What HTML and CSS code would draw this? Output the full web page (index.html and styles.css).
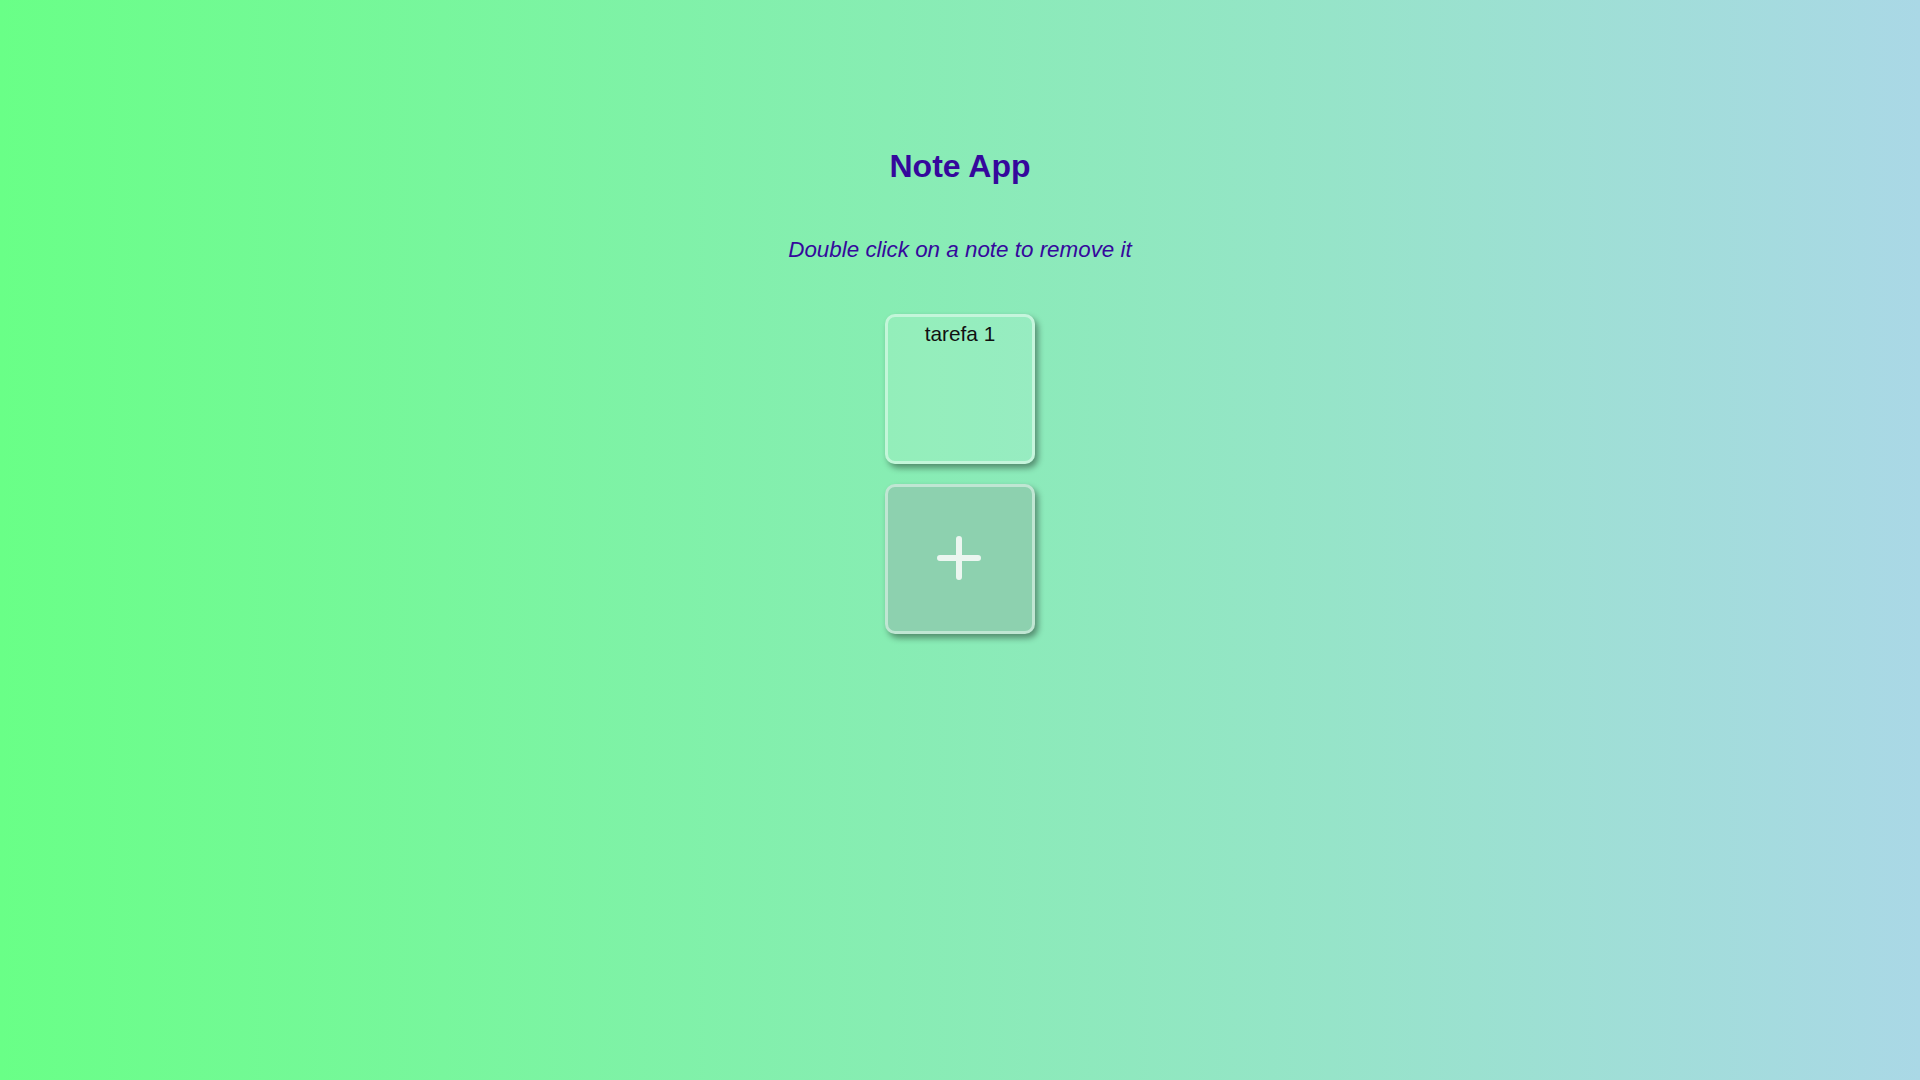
FILE: index.html
```html
<!DOCTYPE html>
<html lang="en">
<head>
<meta charset="UTF-8">
<title>Note App</title>
<link rel="stylesheet" href="styles.css">
</head>
<body>
<main class="app">
  <h1 class="title">Note App</h1>
  <p class="subtitle">Double click on a note to remove it</p>
  <div class="notes">
    <div class="note">tarefa 1</div>
    <button class="add-btn" type="button" aria-label="Add note">
      <svg width="44" height="44" viewBox="0 0 44 44"><path d="M22 3 V41 M3 22 H41" stroke="#ebf6f0" stroke-width="6" stroke-linecap="round" fill="none"/></svg>
    </button>
  </div>
</main>
</body>
</html>
```
FILE: styles.css
```css
html, body {
  margin: 0;
  padding: 0;
  height: 100%;
}
body {
  background: linear-gradient(to right, #69ff87, #aad8e6);
  font-family: "Liberation Sans", Arial, sans-serif;
  min-height: 100vh;
}
.app {
  display: flex;
  flex-direction: column;
  align-items: center;
  padding-top: 148px;
}
.title {
  margin: 0;
  font-size: 32px;
  line-height: 37px;
  font-weight: bold;
  color: #35089c;
}
.subtitle {
  margin: 52px 0 0;
  font-size: 22.4px;
  line-height: 26px;
  font-style: italic;
  color: #35089c;
}
.notes {
  margin-top: 51px;
  display: flex;
  flex-direction: column;
  align-items: center;
  gap: 20px;
}
.note, .add-btn {
  box-sizing: border-box;
  width: 150px;
  height: 150px;
  border: 3px solid rgba(255, 255, 255, 0.45);
  border-radius: 10px;
  box-shadow: 3px 4px 6px rgba(0, 0, 0, 0.4);
}
.note {
  background: rgba(255, 255, 255, 0.1);
  padding: 5px;
  text-align: center;
  font-size: 20.8px;
  line-height: 23px;
  color: #111;
}
.add-btn {
  background: #8dd1af;
  display: flex;
  align-items: center;
  justify-content: center;
  padding: 0 0 3px;
  cursor: pointer;
}
.add-btn svg {
  display: block;
  margin-left: -2px;
}
```
